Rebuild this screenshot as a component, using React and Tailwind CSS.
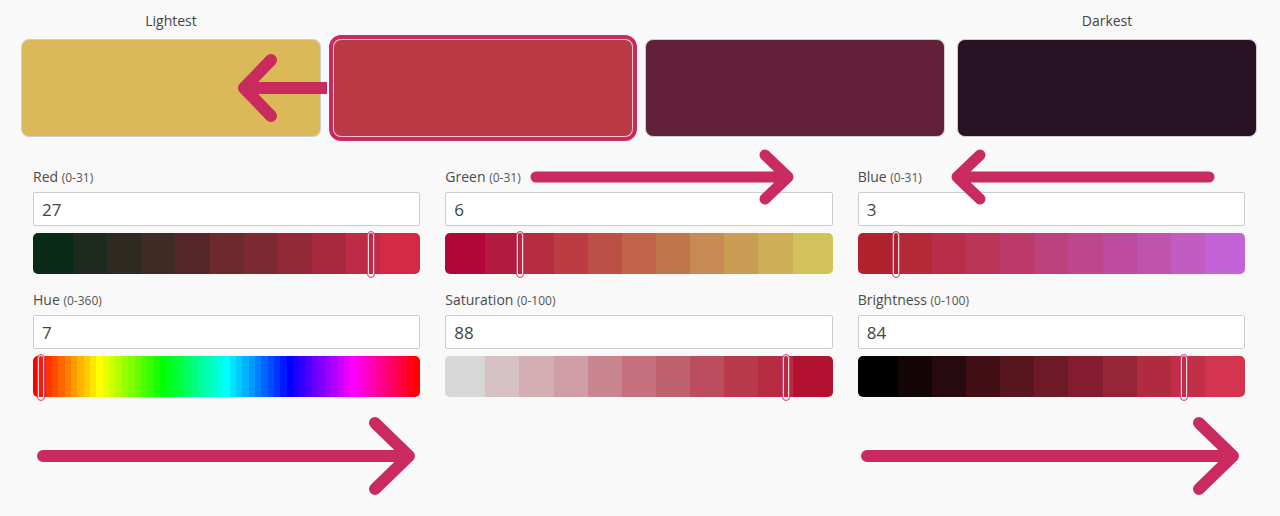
import React from 'react';

const PINK = '#c92b5f';

const swatches = [
  { label: 'Lightest', cls: 'bg-[#dbb959] border-[#cfcfcf]' },
  { label: '', cls: 'bg-[#b93a45] border-[#f1c9d3] outline-4 outline-[#c92b5f]' },
  { label: '', cls: 'bg-[#611f39] border-[#cfcfcf]' },
  { label: 'Darkest', cls: 'bg-[#281123] border-[#cfcfcf]' },
];

const fields = [
  {
    name: 'Red',
    range: '(0-31)',
    value: '27',
    handle: 'left-[334px]',
    segments: [
      'bg-[#0a2a18]', 'bg-[#1f2a1f]', 'bg-[#2e2a21]', 'bg-[#3f2a24]', 'bg-[#552728]', 'bg-[#6c2a2e]',
      'bg-[#7e2832]', 'bg-[#922936]', 'bg-[#a8293c]', 'bg-[#bf2a44]', 'bg-[#d42a46]',
    ],
  },
  {
    name: 'Green',
    range: '(0-31)',
    value: '6',
    handle: 'left-[71px]',
    segments: [
      'bg-[#b0063a]', 'bg-[#b21b3e]', 'bg-[#b72b40]', 'bg-[#bb3c42]', 'bg-[#bd5046]', 'bg-[#c0654a]',
      'bg-[#c2754c]', 'bg-[#c68a52]', 'bg-[#c99d54]', 'bg-[#cfae58]', 'bg-[#d2c25a]',
    ],
  },
  {
    name: 'Blue',
    range: '(0-31)',
    value: '3',
    handle: 'left-[34px]',
    segments: [
      'bg-[#b2222c]', 'bg-[#b42838]', 'bg-[#b82e48]', 'bg-[#bb3558]', 'bg-[#bb3a6a]', 'bg-[#bd417c]',
      'bg-[#bd468c]', 'bg-[#bd4c9e]', 'bg-[#c053ae]', 'bg-[#c25bc2]', 'bg-[#c462d8]',
    ],
  },
  { name: 'Hue', range: '(0-360)', value: '7', handle: 'left-[4px]', hue: true },
  {
    name: 'Saturation',
    range: '(0-100)',
    value: '88',
    handle: 'left-[337px]',
    segments: [
      'bg-[#d7d7d7]', 'bg-[#d5c1c4]', 'bg-[#d3aeb2]', 'bg-[#cf9ea6]', 'bg-[#c98690]', 'bg-[#c5707c]',
      'bg-[#c0616e]', 'bg-[#bc4d5e]', 'bg-[#b83a4a]', 'bg-[#b62a42]', 'bg-[#b21230]',
    ],
  },
  {
    name: 'Brightness',
    range: '(0-100)',
    value: '84',
    handle: 'left-[322px]',
    segments: [
      'bg-[#000000]', 'bg-[#140606]', 'bg-[#270a0f]', 'bg-[#420f17]', 'bg-[#58161f]', 'bg-[#6e1a26]',
      'bg-[#821c2e]', 'bg-[#962535]', 'bg-[#b02b3f]', 'bg-[#c22d48]', 'bg-[#d5344f]',
    ],
  },
];

const hueStripes = Array.from({ length: 61 }, (_, i) => `hsl(${i * 6}, 100%, 50%)`);

const Slider = ({ field }) => (
  <div className="relative mt-[7px] h-[41px]">
    <div className="flex h-full overflow-hidden rounded-[5px]">
      {field.hue
        ? hueStripes.map((c, i) => <div key={i} className="flex-1" style={{ backgroundColor: c }} />)
        : field.segments.map((c, i) => (
            <div key={i} className={`${c} ${i === 0 || i === 10 ? 'w-[40px] shrink-0' : 'flex-1'}`} />
          ))}
    </div>
    {/* Handle */}
    <div
      className={`absolute ${field.handle} top-[-2px] bottom-[-4px] w-[8px] rounded-[4px] border border-[#cf4670] shadow-[inset_0_0_0_1px_#f6dbe3]`}
    />
  </div>
);

const Field = ({ field }) => (
  <div>
    <div className="h-[20px] leading-[20px] text-[14px] text-[#4a4a4a]">
      {field.name} <span className="text-[12px] text-[#555]">{field.range}</span>
    </div>
    <input
      readOnly
      value={field.value}
      className="mt-[5px] block h-[34px] w-full rounded-[2px] border border-[#cccccc] bg-white px-[8px] text-[17px] text-[#444] outline-none"
    />
    <Slider field={field} />
  </div>
);

const Arrows = () => (
  <svg className="pointer-events-none absolute inset-0" width="1280" height="516" viewBox="0 0 1280 516">
    <g fill="none" stroke={PINK} strokeWidth="12" strokeLinecap="round" strokeLinejoin="round">
      {/* Swatch arrow, left */}
      <path d="M327 88H244" strokeLinecap="butt" />
      <path d="M271 60L244 88L271 116" />
      {/* Green, right */}
      <path d="M536 177H788M765 155L788 177L765 199" strokeWidth="11" />
      {/* Blue, left */}
      <path d="M1209 177H957M980 155L957 177L980 199" strokeWidth="11" />
      {/* Bottom left */}
      <path d="M43 456H409M375 423L409 456L375 489" />
      {/* Bottom right */}
      <path d="M867 456H1233M1199 423L1233 456L1199 489" />
    </g>
  </svg>
);

export default function App() {
  return (
    <div className="relative h-[516px] w-full overflow-hidden bg-[#f9f9f9] font-['Open_Sans','Noto_Sans',sans-serif]">
      <div className="ml-[21px] w-[1236px] pt-[11px]">
        <div className="grid grid-cols-4 gap-3">
          {swatches.map((s, i) => (
            <div key={i} className="h-[20px] text-center text-[14px] leading-[20px] text-[#444]">
              {s.label}
            </div>
          ))}
        </div>
        <div className="mt-[8px] grid grid-cols-4 gap-3">
          {swatches.map((s, i) => (
            <div key={i} className={`h-[98px] rounded-[8px] border ${s.cls}`} />
          ))}
        </div>
        <div className="mx-[12px] mt-[30px] grid grid-cols-3 gap-x-[25px] gap-y-[16px]">
          {fields.map((f) => (
            <Field key={f.name} field={f} />
          ))}
        </div>
      </div>
      <Arrows />
    </div>
  );
}
